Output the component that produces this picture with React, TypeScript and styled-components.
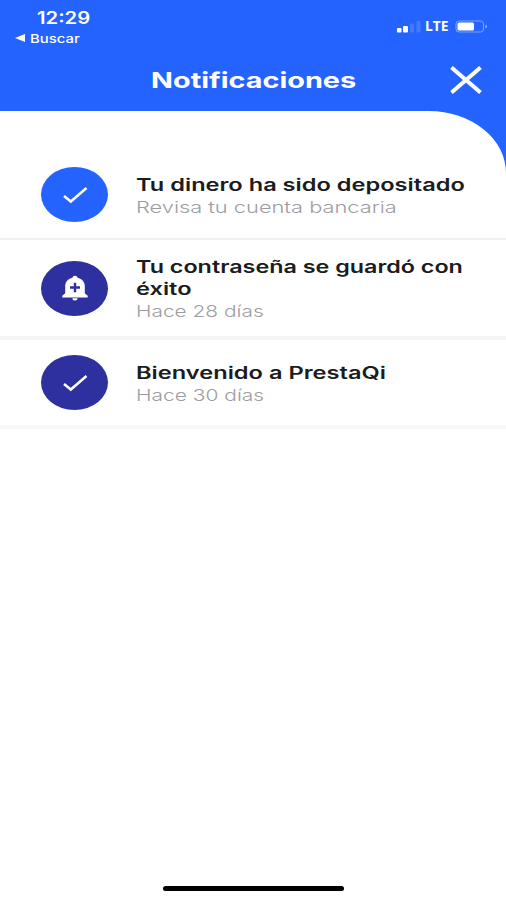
import React from "react";
import styled, { createGlobalStyle } from "styled-components";

const GlobalStyle = createGlobalStyle`
  * { box-sizing: border-box; }
  body { margin: 0; background: #fff; font-family: Inter, "Open Sans", sans-serif; }
`;

const Screen = styled.main`
  display: flex;
  flex-direction: column;
  width: 506px;
  height: 900px;
  overflow: hidden;
  background: #fff;
`;

const Header = styled.header`
  height: 111px;
  background: #2563ff;
  color: #fff;
`;

const StatusBar = styled.div`
  display: flex;
  justify-content: space-between;
  height: 50px;
  padding: 9px 18px 0 15px;
`;

const StatusLeft = styled.div`
  display: flex;
  flex-direction: column;
`;

/* Wide lettering: the glyphs are stretched from their left edge. */
const Wide = styled.span<{ $x: number }>`
  display: block;
  width: max-content;
  white-space: nowrap;
  transform: scaleX(${(p) => p.$x});
  transform-origin: 0 50%;
`;

const Clock = styled(Wide)`
  margin-left: 22px;
  font-size: 17px;
  line-height: 18px;
  font-weight: 600;
`;

const Back = styled.div`
  display: flex;
  align-items: center;
  gap: 5px;
  height: 22px;
  font-size: 12px;
  font-weight: 500;
`;

const StatusRight = styled.div`
  display: flex;
  align-items: center;
  gap: 5px;
  height: 34px;
`;

const Carrier = styled(Wide)`
  width: 24px;
  margin-left: -1px;
  margin-right: 1px;
  font-family: "Open Sans", sans-serif;
  font-size: 13.5px;
  line-height: 16px;
  font-weight: 700;
`;

const TitleBar = styled.div`
  display: flex;
  align-items: center;
  justify-content: space-between;
  height: 60px;
  padding: 0 24px 0 151px;
`;

const Title = styled.h1`
  margin: 0;
  font-size: 21.5px;
  line-height: 26px;
  font-weight: 700;
`;

const CloseButton = styled.button`
  display: flex;
  padding: 0;
  border: 0;
  background: none;
`;

const SheetBackdrop = styled.div`
  flex: 1;
  display: flex;
  background: linear-gradient(#2563ff 80px, #fff 80px);
`;

const Sheet = styled.section`
  flex: 1;
  display: flex;
  flex-direction: column;
  background: #fff;
  border-top-right-radius: 77px 62px;
`;

const List = styled.ul`
  flex: 1;
  margin: 0;
  padding: 40px 0 0;
  list-style: none;
`;

const Item = styled.li<{ $height: number; $line: number; $tone: string }>`
  display: flex;
  align-items: center;
  gap: 28px;
  height: ${(p) => p.$height}px;
  padding-left: 41px;
  border-bottom: ${(p) => p.$line}px solid ${(p) => p.$tone};
`;

const Badge = styled.span<{ $color: string }>`
  display: flex;
  align-items: center;
  justify-content: center;
  width: 67px;
  height: 55px;
  border-radius: 50%;
  background: ${(p) => p.$color};
`;

const Message = styled.div`
  padding-top: 3px;
`;

const Headline = styled(Wide)`
  color: #1c1c1e;
  font-size: 17px;
  line-height: 22px;
  font-weight: 600;
`;

const Detail = styled(Wide)`
  color: #9d9da3;
  font-size: 16.5px;
  line-height: 23px;
  font-weight: 300;
`;

const Footer = styled.footer`
  display: flex;
  justify-content: center;
  height: 14px;
`;

const HomeIndicator = styled.div`
  width: 181px;
  height: 5px;
  border-radius: 3px;
  background: #000;
`;

const Check = () => (
  <svg width="26" height="18" viewBox="0 0 26 18" fill="none" stroke="#fff" strokeWidth="2.5">
    <path d="M2 10 8.800 15.500 24.500 2" />
  </svg>
);

const Bell = () => (
  <svg width="28" height="26" viewBox="0 0 28 26">
    <path
      fill="#fff"
      d="M14 0.800C12.600 0.800 11.800 1.600 11.400 2.800C6.800 4 4.200 7 4.200 11V18.300L1.300 20.800V22.400H26.700V20.800L23.800 18.300V11C23.800 7 21.200 4 16.600 2.800C16.200 1.600 15.400 0.800 14 0.800ZM11.400 23.200a2.600 2.300 0 0 0 5.200 0Z"
    />
    <path stroke="#2e309f" strokeWidth="2.400" d="M9 12.500H19M14 7.800V17.200" />
  </svg>
);

type Line = { text: string; x: number };
type Notice = {
  icon: "check" | "bell";
  color: string;
  height: number;
  line: number;
  tone: string;
  title: Line[];
  detail: Line;
};

const notices: Notice[] = [
  {
    icon: "check",
    color: "#2563ff",
    height: 89,
    line: 2,
    tone: "#eff0f1",
    title: [{ text: "Tu dinero ha sido depositado", x: 1.388 }],
    detail: { text: "Revisa tu cuenta bancaria", x: 1.322 },
  },
  {
    icon: "bell",
    color: "#2e309f",
    height: 100,
    line: 4,
    tone: "#f5f5f5",
    title: [
      { text: "Tu contraseña se guardó con", x: 1.372 },
      { text: "éxito", x: 1.39 },
    ],
    detail: { text: "Hace 28 días", x: 1.265 },
  },
  {
    icon: "check",
    color: "#2e309f",
    height: 89,
    line: 4,
    tone: "#f7f8fa",
    title: [{ text: "Bienvenido a PrestaQi", x: 1.39 }],
    detail: { text: "Hace 30 días", x: 1.27 },
  },
];

export default function App() {
  return (
    <Screen>
      <GlobalStyle />
      <Header>
        <StatusBar>
          <StatusLeft>
            <Clock $x={1.19}>12:29</Clock>
            <Back>
              <svg width="10" height="8" viewBox="0 0 10 8" fill="#fff">
                <path d="M0 4 10 0V8Z" />
              </svg>
              <Wide $x={1.24}>Buscar</Wide>
            </Back>
          </StatusLeft>
          <StatusRight>
            <svg width="24" height="13" viewBox="0 0 24 13" fill="#fff">
              <rect x="0" y="8" width="4.500" height="4.500" rx="1" />
              <rect x="6" y="6" width="5" height="6.500" rx="1" />
              <rect x="13" y="3.500" width="4" height="9" rx="1" opacity=".15" />
              <rect x="19.500" y="1" width="4" height="11.500" rx="1" opacity=".15" />
            </svg>
            <Carrier $x={1.02}>LTE</Carrier>
            <svg width="33" height="13" viewBox="0 0 33 13" fill="none">
              <rect x="1" y="1" width="27.500" height="11" rx="3" stroke="#fff" strokeOpacity=".4" />
              <rect x="2.500" y="2.500" width="16.500" height="8" rx="1.500" fill="#fff" />
              <path d="M30.500 4.500c2 1 2 3 0 4Z" fill="#fff" fillOpacity=".6" />
            </svg>
          </StatusRight>
        </StatusBar>
        <TitleBar>
          <Title>
            <Wide $x={1.34}>Notificaciones</Wide>
          </Title>
          <CloseButton aria-label="Cerrar">
            <svg width="32" height="28" viewBox="0 0 32 28" stroke="#fff" strokeWidth="4">
              <path d="M1.500 1.500 30.500 26.500M30.500 1.500 1.500 26.500" />
            </svg>
          </CloseButton>
        </TitleBar>
      </Header>
      <SheetBackdrop>
        <Sheet>
          <List>
            {notices.map((n) => (
              <Item key={n.title[0].text} $height={n.height} $line={n.line} $tone={n.tone}>
                <Badge $color={n.color}>{n.icon === "check" ? <Check /> : <Bell />}</Badge>
                <Message>
                  {n.title.map((t) => (
                    <Headline key={t.text} $x={t.x}>
                      {t.text}
                    </Headline>
                  ))}
                  <Detail $x={n.detail.x}>{n.detail.text}</Detail>
                </Message>
              </Item>
            ))}
          </List>
          <Footer>
            <HomeIndicator />
          </Footer>
        </Sheet>
      </SheetBackdrop>
    </Screen>
  );
}
